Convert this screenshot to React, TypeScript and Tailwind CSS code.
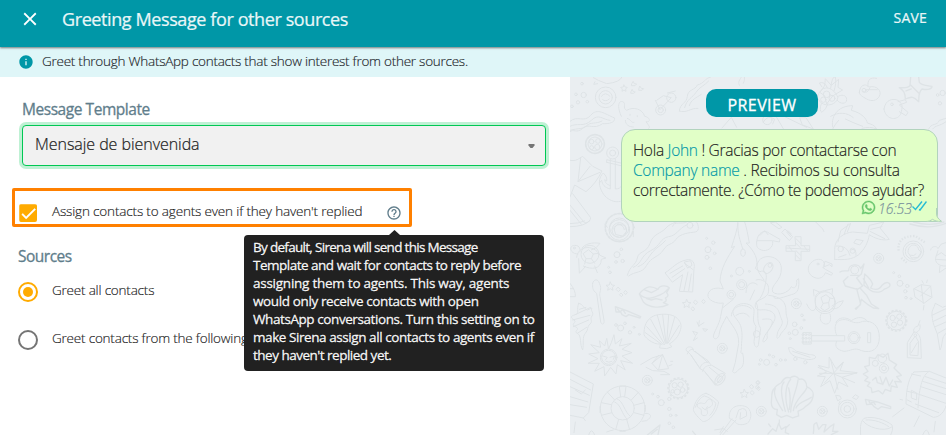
/**
 * Settings dialog for the greeting message sent to contacts from other sources:
 * the template picker and assignment options on the left, a chat preview on the right.
 */
import { useState } from "react";
import { FaWhatsapp } from "react-icons/fa";
import { MdCheck, MdClose, MdHelpOutline, MdInfo } from "react-icons/md";

const HELP_LINES = [
  { text: "By default, Sirena will send this Message", tracking: "tracking-[-0.7px]" },
  { text: "Template and wait for contacts to reply before", tracking: "tracking-[-0.5px]" },
  { text: "assigning them to agents. This way, agents", tracking: "tracking-[-0.25px]" },
  { text: "would only receive contacts with open", tracking: "tracking-[-0.38px]" },
  { text: "WhatsApp conversations. Turn this setting on to", tracking: "tracking-[-0.42px]" },
  { text: "make Sirena assign all contacts to agents even if", tracking: "tracking-[-0.43px]" },
  { text: "they haven't replied yet.", tracking: "tracking-[-0.5px]" },
];

const SOURCES = [
  { id: "all", label: "Greet all contacts", tracking: "tracking-[-0.2px]" },
  { id: "some", label: "Greet contacts from the following", tracking: "tracking-[-0.2px]" },
];

function Header() {
  return (
    <header className="relative z-10 flex h-[47px] items-start bg-[#0097a7] pr-[19px] pl-[19px] text-white/90 shadow-[0_1px_2px_rgba(0,0,0,0.5)]">
      <MdClose className="mt-2 h-[22px] w-[22px] text-white" />
      <h1 className="ml-[21px] grow pt-[7px] text-[18px] leading-6 tracking-[-0.4px] whitespace-nowrap [-webkit-text-stroke:0.2px]">
        Greeting Message for other sources
      </h1>
      <button className="pt-2 text-[14px] leading-5 tracking-[0.2px] [-webkit-text-stroke:0.2px]">SAVE</button>
    </header>
  );
}

function InfoBar() {
  return (
    <div className="flex h-[30px] items-start bg-[#dff6f8] pl-[18px]">
      <MdInfo className="mt-[7px] h-4 w-4 text-[#0097a7]" />
      <p className="ml-2 pt-1 text-[13.5px] leading-5 font-light tracking-[-0.25px] whitespace-nowrap text-[#1c2529] [-webkit-text-stroke:0.15px]">
        Greet through WhatsApp contacts that show interest from other sources.
      </p>
    </div>
  );
}

function HelpTooltip() {
  return (
    <div className="absolute top-[44px] left-[229px] z-20 h-[136px] w-[300px] rounded bg-[#212121] px-[9px] pt-[3px] text-[13.5px] text-white/95 [-webkit-text-stroke:0.3px]">
      <svg className="absolute -top-[5px] left-[145px] h-[5px] w-[11px]" viewBox="0 0 11 5">
        <path d="M0 5 5.5 0 11 5Z" fill="#212121" />
      </svg>
      {HELP_LINES.map((line) => (
        <p key={line.text} className={`leading-[18px] whitespace-nowrap ${line.tracking}`}>
          {line.text}
        </p>
      ))}
    </div>
  );
}

function SettingsForm() {
  const [assign, setAssign] = useState(true);
  const [source, setSource] = useState("all");

  return (
    <main className="h-full w-[570px] shrink-0 bg-white pt-5">
      <p className="ml-[22px] text-[15.5px] leading-6 tracking-[-0.45px] text-[#607d8b] [-webkit-text-stroke:0.3px]">Message Template</p>
      <div className="mt-1 ml-[22px] flex h-[41px] w-[524px] items-start justify-between rounded border border-[#00c853] bg-[#f1f1f1] pr-[10px] pl-3 shadow-[0_0_0_3px_rgba(0,200,83,0.25)]">
        <span className="pt-[6px] text-[16px] leading-6 font-light tracking-[-0.05px] text-[#212121] [-webkit-text-stroke:0.2px]">
          Mensaje de bienvenida
        </span>
        <svg className="mt-[18px] h-[5px] w-[7px]" viewBox="0 0 7 5">
          <path d="M0.5 0h6v1.6L4.5 4h-2L0.5 1.6Z" fill="#757575" />
        </svg>
      </div>

      <div className="relative mt-[22px] ml-3 flex h-[39px] w-[400px] items-start rounded-xs border-3 border-[#ff8000] pl-1">
        <button
          onClick={() => setAssign(!assign)}
          className="mt-[13px] flex h-[18px] w-[18px] items-center justify-center rounded-xs bg-[#ffab00] text-white"
        >
          {assign && <MdCheck className="h-[19px] w-[19px] shrink-0" stroke="currentColor" strokeWidth="0.6" />}
        </button>
        <span className="ml-[15px] w-[334px] pt-[10px] text-[13.5px] leading-5 font-light tracking-[-0.16px] whitespace-nowrap text-[#212121] [-webkit-text-stroke:0.15px]">
          Assign contacts to agents even if they haven't replied
        </span>
        <MdHelpOutline className="mt-[14px] h-4 w-4 text-[#607d8b]" />
        <HelpTooltip />
      </div>

      <p className="mt-[17px] ml-[18px] text-[15.5px] leading-6 tracking-[-0.5px] text-[#607d8b] [-webkit-text-stroke:0.3px]">Sources</p>
      <div className="mt-3 ml-[18px] flex flex-col gap-6">
        {SOURCES.map((s) => (
          <button key={s.id} onClick={() => setSource(s.id)} className="flex h-6 items-start text-left">
            <span
              className={`mt-[2px] flex h-5 w-5 items-center justify-center rounded-full border-2 ${
                source === s.id ? "border-[#ffab00]" : "border-[#757575]"
              }`}
            >
              {source === s.id && <span className="h-[10px] w-[10px] rounded-full bg-[#ffab00]" />}
            </span>
            <span
              className={`ml-[14px] text-[13.5px] leading-5 font-light whitespace-nowrap text-[#212121] [-webkit-text-stroke:0.15px] ${s.tracking}`}
            >
              {s.label}
            </span>
          </button>
        ))}
      </div>
    </main>
  );
}

/** Faint seaside line art behind the chat. */
function Wallpaper() {
  return (
    <svg
      className="absolute inset-0 h-full w-full"
      viewBox="0 0 376 358"
      fill="none"
      stroke="#dee3e6"
      strokeLinecap="round"
      strokeLinejoin="round"
      strokeWidth="3"
    >
      {/* top left: porthole, cat, weed, sponge, anchor, bottle */}
      <g transform="scale(.3333)">
        <circle cx="107" cy="61" r="31" />
        <circle cx="107" cy="61" r="20" />
        <path d="M94 58q12-16 26 0M98 68q9 8 20-2M70 2q12 8 40 18 40-4 46-20M75 14l-4 8 12-2" />
        <circle cx="41" cy="54" r="8" /><circle cx="36" cy="20" r="4" /><circle cx="18" cy="52" r="4" />
        <circle cx="52" cy="74" r="4" /><circle cx="24" cy="76" r="5" /><circle cx="6" cy="88" r="4" />
        <path d="m162 24 3 6 7 1-5 5 1 7-6-4-6 4 1-7-5-5 7-1ZM190 14l3 6 7 1-5 5-11 0 1-5ZM187 38l3 6 6 1-5 4-9 0 1-5ZM210 28l4 6 7 1-5 5-10 0 1-6Z" />
        <path d="M0 133c22-20 42 6 62-18s42-4 72 8c2 14-18 18-36 17-28 20-42-3-60 14s-28 0-38 10M0 148c20-12 42 4 64-18s34-2 56 0M0 160c28-8 38-2 50-14s28-4 46-14" />
        <path d="M154 118c-14-30-8-48 4-44s-2 20 12 26c20-12 48-4 54 18 20 4 16 20 4 16 8 12 14 16 8 20M172 124c14 6 10 14 20 12M180 112v3M202 116v3M166 130c0 14 12 20 24 20" />
        <circle cx="272" cy="99" r="15" /><circle cx="272" cy="99" r="8" /><circle cx="304" cy="62" r="14" />
        <path d="m256 70 14 28 34-36-24-6-20 14M292 48l24-6" />
        <path d="M328 102c2-24 22-22 24-44s24-18 30-34c20-4 22-20 40-24M328 102c22 8 34-10 56-8M344 92c6-26 24-30 34-46s26-20 38-34M358 86c4-18 22-24 36-34" />
        <circle cx="75" cy="201" r="28" strokeDasharray="9 4" strokeWidth="5" />
        <circle cx="75" cy="201" r="21" /><circle cx="65" cy="194" r="7" /><circle cx="84" cy="192" r="7" />
        <circle cx="82" cy="210" r="8" /><circle cx="65" cy="212" r="6" />
        <circle cx="128" cy="228" r="18" /><circle cx="128" cy="228" r="9" />
        <path d="M121 246v90c-18-4-24-14-26-26l-7 8c0-16 6-24 12-30 8 8 12 16 10 24l-6-4c2 10 6 14 17 18M136 246v90c10 0 16-4 18-8M88 318c4 44 44 64 66 54M110 256l42 10M110 256v-8l42 10" />
        <path d="M0 250c20 4 26-6 38-12l30 30 28 14c-12 24-26 44-48 62L14 324 0 360M32 242l-8 72 66-28M24 314l36-46M0 384l44 54c10 0 18-8 18-16L8 350M0 400l34 42M0 440q26 0 44-8" />
        <circle cx="148" cy="452" r="29" /><circle cx="148" cy="452" r="42" strokeDasharray="7 5" strokeWidth="5" />
        <path d="M133 458c0-20 28-20 30 0M308 448c4-18 28-4 44-14s20 4 28 0" />
      </g>
      {/* top right: turtle, coconut, starfish, dolphin */}
      <g transform="translate(230 0) scale(.3333)">
        <path d="M52 62c8-40 46-38 62 0-6 22-32 28-50 16ZM66 30 58 18q16-6 24 14M92 34q4-38 14-34 4 18-4 42M64 80q-8 22 2 26 12-8 18-26M112 60c12-10 28-6 28 8s-20 14-28 2" />
        <circle cx="80" cy="52" r="10" /><circle cx="96" cy="64" r="9" /><circle cx="70" cy="68" r="8" />
        <path d="M178 46c2-26 22-26 28-16 28-6 40 14 32 28s-24 16-38 8-22-12-22-20ZM196 38h36M204 28c-2-20 6-28 26-24M188 42q14 12 22-10" />
        <circle cx="192" cy="40" r="6" />
        <path d="M298 32c14 0 24 2 32-6l2-26M298 32c12 8 18 14 18 34 20-8 24-8 40 8 2-18-2-26 10-38 18 4 30 0 30-8-20-4-30-2-38-12l-2-16M332 24l24 24M318 42l16-6" strokeWidth="4" />
        <path d="M252 96c4-30 28-32 42-26 16 14 14 18 8 42-14 22-46 14-50-16ZM294 74l22-6 4 8-22 8 26 22-6 10-20-12" />
        <circle cx="276" cy="82" r="4" />
        <path d="M98 150c-6-40 22-64 60-64l-4 14c32 8 46 26 48 38 12 4 22 6 28 18-14-6-28-6-44-2M92 118c24-14 50-12 68 4M116 130q-10 10-18 26M136 126q20 10 52 22M0 122l18 0 22 34-32-12Z" />
        <circle cx="428" cy="48" r="8" /><circle cx="420" cy="79" r="5" /><circle cx="413" cy="54" r="4" />
        <path d="M386 156c8-20 26-8 32-26l20-6M398 156c8-12 22-8 40-22" />
      </g>
      {/* behind and around the preview label */}
      <g transform="translate(0 -7) scale(.3333)">
        <path d="M508 46c-6-16 6-18 6-26M520 40c8-14-2-20 8-26M580 156q14-24 34-8l-6 14M620 142l20 34M640 138l70 34M456 174l28-32 16 30M750 66c18-20 14-22 16-40l18 20 22-18-2 24 14 8-30 18-18 24-6-24Z" />
        <circle cx="592" cy="150" r="14" />
      </g>
      {/* lower left */}
      <g transform="translate(0 143) scale(.3333)">
        <circle cx="148" cy="30" r="31" /><circle cx="148" cy="30" r="22" />
        <path d="M132 22l12-10 20 4 6 18-12 14-20-4ZM104 12l8 10M188 10l6 14M190 34v16M0 20q42 0 60-18" />
        <path d="M172 166c8-30 26-30 30-52s28-14 38-44 32-28 48-46 38-16 54-30M176 168c20-16 40-6 54-32s36-24 50-46 26-14 38-32 42-20 58-22 8-30 0-34M190 142c26-10 22-36 52-50s28-38 54-42 28-24 56-36M204 140c24-8 30-28 44-44s24-18 38-34" />
        <circle cx="360" cy="16" r="9" />
        <path d="M20 112c2-34 50-42 70-6l18 8-14 4c0 30-30 32-54 20M36 84c8-12 30-18 54-14q-10 16-26 20M24 102C-2 102-4 76 14 76s16 14 16 20M26 116l2 44 18-20M74 138l8 20M56 90l14 12-6 14H48l-8-14ZM70 102l16-2M64 116l10 14M48 116l-4 16" />
        <circle cx="13" cy="84" r="3" /><circle cx="60" cy="103" r="27" />
        <circle cx="141" cy="104" r="9" /><circle cx="158" cy="123" r="5" /><circle cx="138" cy="126" r="4" /><circle cx="154" cy="88" r="4" /><circle cx="120" cy="157" r="4" /><circle cx="116" cy="142" r="3" />
        <circle cx="414" cy="89" r="9" /><circle cx="430" cy="68" r="5" /><circle cx="411" cy="112" r="6" /><circle cx="421" cy="145" r="4" /><circle cx="434" cy="100" r="4" /><circle cx="410" cy="55" r="3" />
        <path d="M68 190c2-14 18-14 20 0 10 18-2 26 2 40l12 70c2 14-6 16-10 6L80 220c-14-10-12-18-12-30Z" />
        <path d="m121 186 4 9 9 1-7 6 2 9-8-5-8 5 2-9-7-6 9-1ZM145 202l6 7-6 6-6-6ZM167 212l5 6-5 6-5-6ZM154 220l5 5-5 5-5-5ZM350 238l4 9 9 1-7 6 2 9-8-5-8 5 2-9-7-6 9-1ZM377 241l6 6-6 7-6-7ZM401 239l5 6-5 6-5-6ZM369 261l5 6-5 6-5-6Z" />
        <path d="M286 158c22-14 34-32 62-38 20-6 28 10 24 26l-4 70-40-2 10-50-30 22ZM344 130l24 18M300 160l38-22M306 172l38-26M342 212l12-56M356 212l8-50M344 126l18-4 4 14-12 8Z" />
        <path d="M208 222c22-28 38-24 56-14 6-14 28-12 34-4l-8 14q10 10-4 16 8 10-6 14l14 6c-22 12-56 10-74-8ZM208 222c22 22 46 10 64 2s14-12 24-18M224 210l20 8 16-8M230 236l14 4 14-4 18 4" strokeWidth="4" />
        <path d="M136 260l34 12 42 18-2 4-34-10-8 6-12-6-4-8-14 0ZM142 266l8 10 8-8 8 12" strokeWidth="4" />
        <circle cx="152" cy="324" r="9" /><circle cx="180" cy="337" r="5" /><circle cx="165" cy="310" r="4" /><circle cx="138" cy="315" r="4" /><circle cx="192" cy="322" r="3" /><circle cx="208" cy="343" r="3" />
        <path d="M270 372c-20 4-52-24-48-32 0-32 16-48 34-54 22-6 50-4 62 6 12 10 18 20 14 36-6 22-18 34-34 44l8 8-16 6-20-2ZM284 374l-42-76M286 370l-24-84M288 370l-10-86M290 370l6-84M292 370l22-78M294 370l34-54M280 374l-50-54M276 374l-50-36" />
        <path d="M26 250c-8 20 4 30-10 34s-16 8-4 16-14 12 4 20-8 14 6 20 6 34 16 50c4-18-2-40 8-50s4-20 14-28-2-14 6-24-6-14 0-24l-14 6c-12-4-12-18-26-20ZM16 284l46-22M8 300l52-14M10 320l46-20M22 340l28-18M28 268l20-6M0 190q18 22 16 40H0M0 206h10" />
        <path d="m376 350-6 12 12-8M388 302l-2 16 16-10M376 346l-8-12 14 4ZM387 320l-6-14M404 334l-6-8 14 2Z" />
        <circle cx="116" cy="412" r="25" /><circle cx="116" cy="412" r="21" />
        <path d="m116 386 8-18 8-24 4 28 20-16-8 22 36-8-28 18 30 10-30 10 32 22-36-8 14 28-24-16-4 28-16-20-18 26-2-28-28 14 14-24-34 0 30-14-28-14 32-4-26-24 30 8-4-20 16 16 6-22ZM98 408l14 4-6 8M120 412l14-4-4 10M108 424q8 6 18 0" />
        <path d="M212 434l34-20 32-10 18 42-32 4-18-20 32-26M246 430l20-24M266 448l12-44M228 442l20 10 34 2 18 10-28 0M296 438l10-4M302 424l6 0" />
        <circle cx="232" cy="481" r="15" /><circle cx="232" cy="481" r="8" /><path d="m227 476 10 10M237 476l-10 10" />
        <circle cx="457" cy="385" r="15" /><circle cx="457" cy="385" r="8" /><path d="m452 380 10 10M462 380l-10 10" />
        <circle cx="325" cy="505" r="28" /><circle cx="325" cy="505" r="31" strokeDasharray="3 9" strokeWidth="5" />
        <circle cx="314" cy="496" r="8" /><circle cx="332" cy="494" r="8" /><circle cx="338" cy="510" r="7" /><circle cx="322" cy="516" r="9" /><circle cx="308" cy="514" r="5" />
        <path d="M348 390c-2-10 14-12 20-6l2 8 44 30 8 12 44 26-30 36-32-42-14-8-28-42Z" />
        <path d="M352 402q8-18 18-14M362 404l26 38M376 394l38 34M390 446c2-12 10-20 26-20M398 454c2-10 10-18 24-18M406 458l30 34M418 442l34 28" />
        <ellipse cx="450" cy="478" rx="12" ry="20" transform="rotate(38 450 478)" /><ellipse cx="450" cy="478" rx="6" ry="11" transform="rotate(38 450 478)" />
        <circle cx="158" cy="565" r="67" /><circle cx="158" cy="565" r="35" />
        <path d="M148 500l4 30M168 500l-4 30M94 548l30 6M94 586l32-8M222 548l-30 8M222 586l-30-8M138 626l8-28M178 626l-8-28M112 516l22 24M206 516l-22 24M140 536c22 8 22 40 42 54M134 546c20 8 20 36 38 52M130 630q-10 2-20 6M150 498h16M90 560v18M150 634h16M226 556v18M226 580c18 0 22 10 4 22l-14 2" />
        <path d="M0 456l70 36-14 86-16 16L0 586M0 478l62 32M0 500l58 26M0 530l54 16M0 554l50 8M16 510l18 12 12-12M16 606l-4 32M40 594l6 8M56 645q8-26 18 0" />
        <path d="M408 520c14 4 30 18 38 26-4 20-10 30-18 40-10 14-22 20-30 18-10-8-28-26-28-36 4-20 16-44 38-48Z" />
        <path d="M404 528c14 4 24 12 34 22-4 18-10 28-18 36M376 562c8-20 14-28 26-34M382 554c12-14 20 6 28-10s22 2 16 12-20 4-14 18-20 20-18 2-16-6-12-22ZM396 562l10 8 6-10" />
        <circle cx="274" cy="548" r="9" /><circle cx="298" cy="537" r="5" /><circle cx="298" cy="567" r="5" /><circle cx="264" cy="530" r="4" /><circle cx="248" cy="522" r="3" /><circle cx="302" cy="586" r="4" /><circle cx="318" cy="586" r="3" /><circle cx="298" cy="610" r="4" /><circle cx="310" cy="622" r="4" />
        <path d="M232 645l38-30-6 30M244 642l18-14M368 634l10 12" strokeWidth="4" />
        <path d="M478 594c-4-36 32-44 54-32 18 16 10 40 0 48-20 8-32 4-38-6ZM498 594l8-24q26-14 24 18l-20 10 2-20M498 600l-40 45M486 596l-36 49M434 630l26-4 12 8M450 638l10-18" />
        <path d="m523 508 4 9 9 1-7 6 2 9-8-5-8 5 2-9-7-6 9-1ZM545 494l6 7-6 6-6-6ZM547 512l6 7-6 6-6-6ZM565 482l5 6-5 6-5-6ZM566 500l5 6-5 6-5-6Z" />
        {/* squid */}
        <path d="M504 5c-2 26-10 46-20 78l10-4c-22 34-42 66-44 104l10 24c-20-6-42-2-46 16s28 30 46 26l-8 40c-4 26-22 48-22 62 8 14 18-2 18-12 2-16 14-34 22-50 14 28 38 44 36 82l-10 56-8 28c6 10 14-2 20-8 12-4 14-20 12-36l-2-12c-6 4-6-2-4-10 0-28 6-42-2-72-8-20-28-30-22-48 10-24 52-24 62-2 2 20-8 34 6 52l-6 46c2 24 14 18 14 4l6-44c-16-24-2-56-14-78 18-12 26-38 30-66 4-22-4-32-18-26l-14-10c14-22-4-54-28-76l10 0c-4-24-8-46-16-70ZM460 262l30-24M528 218c0-30 22-36 34-24M540 240l14-30M484 288c0-28 36-42 60-22M498 286q24-16 40 4M504 10c-2 30 6 50 14 76" />
        <ellipse cx="519" cy="98" rx="7" ry="11" /><circle cx="509" cy="154" r="12" /><circle cx="515" cy="194" r="15" /><circle cx="515" cy="194" r="9" /><circle cx="484" cy="224" r="13" /><circle cx="484" cy="224" r="7" /><circle cx="538" cy="154" r="3" /><circle cx="484" cy="168" r="3" />
      </g>
      {/* lower right */}
      <g transform="translate(186 143) scale(.3333)">
        <path d="M2 66c2-30 24-38 38-26l32 18-2 8-20-4c4 22-18 34-34 28S2 76 2 66ZM4 62l44 0M12 46l14-14 10 12M44 8l14-2 20 16-8 4ZM88 28l22 22-10 12-22-24ZM92 36l12 14M96 32l10 10" />
        <path d="M118 50h17v27h26v17h-26v28h-17V94H90V77h28ZM90 84l70 4M120 56l14 14M120 70l14 14M120 92l14 14M120 106l12 12M98 78l10 14M144 78l10 14" />
        <path d="M236 118v-30c0-34 30-50 54-52l44 4 6-24 44-10-12 18 28 34c-20 6-46-4-60-14-4 24-14 44-32 60-20 16-46 16-72 14ZM246 66l8-34 30-22-10 26M294 68l6-10 22 4-10 12ZM240 78q34-4 42 28M342 34l44 22M344 28l34-8M284 90q18-8 16 16M248 112l22-8M264 44l12-32M178 5l22 22 4 8" />
        <circle cx="254" cy="87" r="8" /><circle cx="290" cy="92" r="8" />
        <circle cx="368" cy="115" r="15" /><circle cx="368" cy="115" r="8" /><path d="m363 110 10 10M373 110l-10 10" />
        <circle cx="121" cy="251" r="15" /><circle cx="121" cy="251" r="8" /><path d="m116 246 10 10M126 246l-10 10" />
        <circle cx="199" cy="574" r="15" /><circle cx="199" cy="574" r="8" /><path d="m194 569 10 10M204 569l-10 10" />
        <circle cx="16" cy="574" r="15" /><circle cx="16" cy="574" r="8" /><path d="m11 569 10 10M21 569l-10 10" />
        <circle cx="472" cy="94" r="31" /><circle cx="472" cy="94" r="24" />
        <path d="M456 96c0-26 30-28 32-6l8 6-10 16-18 2ZM464 106q10 4 16-4" /><path d="M428 92q-6-44 50-44l30 20" strokeWidth="7" strokeDasharray="4 5" strokeLinecap="butt" /><path d="M436 114l16 14" strokeWidth="7" strokeDasharray="4 5" strokeLinecap="butt" />
        <path d="M204 138c6-24-22-24-34-14-22 16-14 40 4 48s30-2 34-14l18 8 4-6-22-12-8-6 20-8 8 6v-8l-20-8Z" /><circle cx="186" cy="132" r="3" />
        {/* octopus */}
        <path d="M24 180c-8-14-24-26-20-48 8-34 70-28 72 12s-34 50-26 72c16 14 48 2 56-16 12 10 18-4 16-20l6-4c2 26 0 44-22 48-36 12-50 16-54 6M0 180c18-6 40 8 38 30 0 16-10 22-28 30s-16 30 2 30c30-4 54 10 42 34s-24 28-20 50c-6 12-16 18-12 4 4-18 22-30 26-46 6-18-16-16-28-14M38 226c40 4 52 22 52 46s8 22 4 40-18 22-24 38c-10 14-8-4-4-16 8-16 18-22 10-38s-4-42-48-44" />
        <ellipse cx="37" cy="144" rx="12" ry="18" transform="rotate(35 37 144)" /><circle cx="42" cy="136" r="6" />
        {/* diver */}
        <path d="M252 156c8-6 18-2 26-4-2-20 32-24 36-6l10-14-8 30-14 12 18 24-16 10-36-10-6-14 14-14M326 162c12 10 20 18 24 30l-6 12c16 8 28 2 34-8 14-14 24-8 24 0s-12 8-18 12c-10 12-34 10-42 2l-18-14ZM302 206l12 46-14 16M312 204l20 22 14 26 22 14-16-2-16-10-20-16-4 18-14 10M322 176l16 28M284 166h24" strokeWidth="4" />
        <circle cx="296" cy="150" r="12" />
        {/* turtle */}
        <path d="M178 244c-6-22 14-30 28-32l24-6-2 18c14 16 12 36 2 48-20 16-42 8-50-6ZM174 228l-2-20 18 8M180 264c-8 14-18 10-28-12M228 258l20-12 14-4c-8 20-20 26-34 24M196 280c-8 14-2 30 12 32s20-14 14-30M196 232l14-8 12 10-4 14-16 2ZM202 250l-8 14 12 8 14-8-2-16M222 234l10 2" />
        <circle cx="207" cy="245" r="30" />
        <circle cx="118" cy="337" r="9" /><circle cx="138" cy="286" r="4" /><circle cx="116" cy="313" r="7" /><circle cx="100" cy="340" r="4" /><circle cx="136" cy="324" r="4" /><circle cx="144" cy="300" r="3" /><circle cx="103" cy="356" r="3" />
        <circle cx="432" cy="190" r="9" /><circle cx="454" cy="198" r="5" /><circle cx="430" cy="169" r="4" /><circle cx="448" cy="214" r="5" /><circle cx="450" cy="233" r="4" /><circle cx="465" cy="236" r="3" /><circle cx="413" cy="158" r="3" />
        <path d="M474 206l22-12 28 4 4 34-24 18-26-18ZM474 206l54 26M496 194l6 56M524 198l-30 30M504 256l-2 14M498 182l4 8M514 180l-2 8" />
        <path d="M524 90c0-12 20-14 22-4l10-14 14-4M546 92l-6 18c-6 16 8 30 30 28M540 108l16-10 14 10M552 138l-2 20 20-14M540 118l30 2" />
        <circle cx="421" cy="302" r="28" /><circle cx="421" cy="302" r="31" strokeDasharray="3 9" strokeWidth="5" />
        <circle cx="410" cy="294" r="8" /><circle cx="430" cy="290" r="8" /><circle cx="432" cy="308" r="8" /><circle cx="414" cy="314" r="8" />
        {/* guitar */}
        <path d="M242 346c-14-34 4-52 32-46 20 8 28 12 46 4 30-4 50 14 50 48s-22 50-54 40c-20-12-32 2-52 2-20-4-30-14-22-30M240 308c6-18 30-18 46-6 20-14 40-12 50 4M168 347h98v16h-98ZM142 338h24v34h-24ZM336 338h8v30h-8Z" />
        <circle cx="294" cy="353" r="18" /><circle cx="294" cy="353" r="13" />
        {[344, 355, 366].map((y) => (
          <g key={y}>
            <circle cx="141" cy={y} r="3" /><circle cx="150" cy={y} r="3" /><circle cx="160" cy={y} r="3" />
          </g>
        ))}
        <path d="M454 412v-44l20-32c12 0 18 12 20 24l2 54ZM462 404v-34l16-22 10 18-2 40ZM474 336q-6-12 12-18l6-16M480 338q16-6 12-24M466 398l18-30" />
        <circle cx="478" cy="346" r="4" />
        <path d="M538 250c-4 16-12 20-10 36s2 18 6 30l10 26 8 48c6-8 6-30 10-40l8-10M528 286l42-20M532 304l38-18M538 320l32-14M546 340l24-14M538 250l22 12 10-4" />
        <path d="M98 384c6-6 16 4 24 10l38 10c10 0 22 2 18 10-14 8-28 4-44 0s-34-8-36-30ZM110 394l52 18" /><circle cx="118" cy="417" r="5" /><circle cx="148" cy="427" r="5" />
        <circle cx="32" cy="427" r="9" /><circle cx="52" cy="410" r="4" /><circle cx="14" cy="420" r="4" /><circle cx="60" cy="434" r="4" /><circle cx="10" cy="433" r="3" /><circle cx="74" cy="420" r="4" /><circle cx="88" cy="420" r="3" /><circle cx="40" cy="405" r="3" />
        <path d="m220 412 20 34 22-20-10 26 52 6-46 14 18 28-28-14-12 34-14-38-28 18 14-30-24-2 28-12-26-20 32 8ZM224 418l22 90M186 442l110 46M190 460l112 0M262 428l-56 60" />
        {/* shell */}
        <path d="M64 568c-10 0-18-6-18-20 2-24 0-36 10-44 8-12 14-10 20-16 8-14 16-18 26-14 12-10 22-4 28 4 14-4 22 8 22 22 14 6 24 18 18 34-4 16-14 20-22 26-8 10-14 8-22 14l2 14-18 6-18-8-16 6-14-8ZM80 572c-24-36-28-56-22-66M88 574c-10-38-18-70-4-88M98 576c-14-40-10-80 6-98M104 576c2-40 20-70 22-96M112 572c4-34 34-50 40-68M120 564c6-18 34-22 46-32M98 504q8 30 2 64" strokeWidth="4" />
        {/* puffer fish */}
        <path d="M340 412l18 4 8-12 16 8 14-12 4 20 22 14-8 10 22 22-14 4 14 16-20-2 8 18-18-4-2 16-16-6-8 14-12-10-20 6-2-14-12-6 8-10-16-6 10-10-14-10 14-8-10-14 14-4ZM372 470l8 24 10-22 10 26 10-18M350 480l10-8 4 16 12 4" strokeWidth="4" />
        <circle cx="379" cy="415" r="13" /><circle cx="384" cy="445" r="14" /><circle cx="384" cy="445" r="7" /><circle cx="358" cy="430" r="9" />
        <circle cx="274" cy="567" r="27" /><circle cx="274" cy="567" r="20" /><circle cx="274" cy="567" r="10" /><path d="m240 526 12 2 4 8-10 6ZM290 532l8-8 10 6-6 8ZM252 544l-4 8" />
        <path d="M328 538l36 8 40 14v6l-28-6-10 8-12-8-6-8-16 2ZM338 542l4 8 10-4 6 8" strokeWidth="4" />
        {/* chest */}
        <path d="M474 456l46-2 50 20M474 456c-12 12-24 44-24 96l82 40c20 0 34-18 38-34M520 454c-20 10-30 42-34 110M454 514l26 6 90 30M508 470l62 20M500 484l70 22M494 500l76 24M478 552l70 26M466 512v22l16 6v-20ZM454 540l12 6M466 462l28 6M444 564l-34 26M490 588l-16 32M538 604l-4 32M440 540l-8-2" />
        <path d="M314 645c-2-28 0-40 10-50 26-8 64 4 84 20 4 14 0 20-4 30M322 604c10 16 60 34 84 18M330 600c24-2 52 8 68 20M500 645q12-30 20 0" />
        <path d="M172 640c4-18-4-28 10-32l6 20 12-14 10 0-6 22 18-16 12-8-4 22 16 0-20 10M36 642l14-16 10 8 8-24 8 18 14-8-2 18 10 4M70 600v10M38 612l6 8M100 614l-8 8M462 12q58 18 108-2M472 6q50 14 92 0" strokeWidth="4" />
        <circle cx="5" cy="488" r="5" /><circle cx="4" cy="502" r="5" /><circle cx="2" cy="342" r="10" />
      </g>
    </svg>
  );
}

function Preview() {
  return (
    <aside className="relative flex h-full grow flex-col items-start bg-[#eaeef1]">
      <Wallpaper />
      <div className="relative mt-3 ml-[136px] flex h-7 w-28 justify-center rounded-[10px] bg-[#0097a7] pt-1 text-[16px] leading-6 tracking-[0.4px] text-white [-webkit-text-stroke:0.3px]">
        PREVIEW
      </div>
      <div className="relative mt-3 ml-[51px] h-[93px] w-[317px] rounded-[14px] rounded-br-none border border-[#b2d3bd] bg-[#e1ffc7] pt-[10px] pl-[11px] text-[15.5px] leading-5 font-light whitespace-nowrap text-[#212121] [-webkit-text-stroke:0.15px]">
        <p className="tracking-[-0.28px]">
          Hola <span className="text-[#0097a7]">John</span> ! Gracias por contactarse con
        </p>
        <p className="tracking-[-0.26px]">
          <span className="text-[#0097a7]">Company name</span> . Recibimos su consulta
        </p>
        <p className="tracking-[-0.36px]">correctamente. ¿Cómo te podemos ayudar?</p>
        <div className="flex items-start pl-[228px]">
          <FaWhatsapp className="h-[15px] w-[15px] text-[#66c56c]" stroke="currentColor" strokeWidth="16" />
          <span className="ml-[2px] w-[34px] text-[14px] leading-[18px] text-[#78909c] italic">16:53</span>
          <svg className="mt-[1px] h-[10px] w-[15px]" viewBox="0 0 15 10" fill="none" stroke="#26bcd4" strokeWidth="1.4">
            <path d="m.5 5.5 3 3 6.5-8M7 8.5l1 .5L14.5 .5" />
          </svg>
        </div>
        <svg className="absolute -right-[5px] -bottom-px h-[14px] w-[16px]" viewBox="0 0 16 14">
          <path d="M0 14V0h11v6c0 3 2 5 5 7.5-4 .5-7-.5-9-2-2 1.5-4 2-7 2Z" fill="#e1ffc7" />
          <path d="M10.5 0v6c0 3 2 5 5 7.3-4 .4-7-.6-9-2-2 1.5-4 2.2-7 2.2" fill="none" stroke="#b2d3bd" />
        </svg>
      </div>
    </aside>
  );
}

export default function App() {
  return (
    <div className="flex h-[435px] w-[946px] flex-col overflow-hidden bg-white font-['Open_Sans',sans-serif]">
      <Header />
      <InfoBar />
      <div className="flex h-[358px]">
        <SettingsForm />
        <Preview />
      </div>
    </div>
  );
}
